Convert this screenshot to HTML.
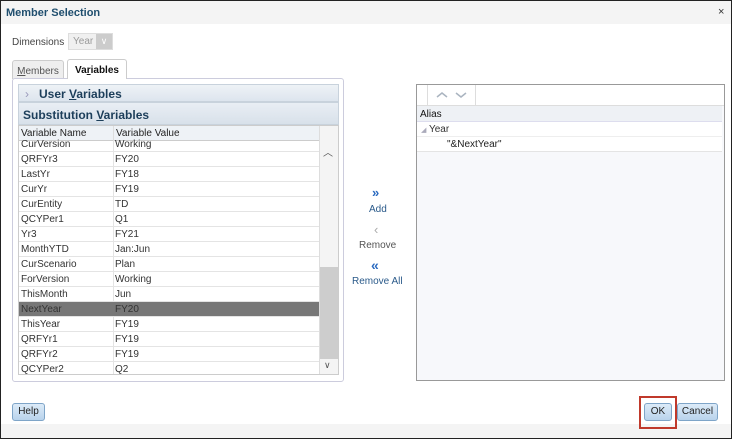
<!DOCTYPE html><html><head><style>
*{box-sizing:border-box;margin:0;padding:0}
body{width:732px;height:439px;font-family:"Liberation Sans",sans-serif;font-size:10px;color:#333;background:#fff;position:relative;overflow:hidden}
.a{position:absolute}
.row{position:absolute;left:0;width:300px;height:15px;border-bottom:1px solid #e4e4e4;line-height:16px}
.row span{position:absolute;top:0}
.btn{position:absolute;border:1px solid #7fa5c8;border-radius:3px;background:linear-gradient(#dcebf8,#b9d3ec);font-size:10px;text-align:center;line-height:16px;color:#222}
</style></head><body>
<div class="a" style="left:0;top:0;width:732px;height:439px;border:1px solid #222"></div>
<div class="a" style="left:1px;top:1px;width:730px;height:23px;background:#f4f4f4"></div>
<div class="a" style="left:6px;top:7px;font-weight:bold;color:#1f4e6e;font-size:11px">Member Selection</div>
<div class="a" style="left:718px;top:6px;font-size:11px">×</div>
<div class="a" style="left:12px;top:37px;color:#444">Dimensions</div>
<div class="a" style="left:68px;top:33px;width:45px;height:17px;border:1px solid #ddd;background:#f0f0f0;color:#999;padding-left:4px;line-height:16px">Year</div>
<div class="a" style="left:96px;top:34px;width:16px;height:15px;background:#ccc;color:#fff;text-align:center;line-height:14px;font-size:9px">∨</div>
<div class="a" style="left:12px;top:60px;width:52px;height:19px;border:1px solid #ccc;border-bottom:none;background:#eee;text-align:center;line-height:21px;color:#555;border-radius:3px 3px 0 0"><u>M</u>embers</div>
<div class="a" style="left:67px;top:59px;width:60px;height:20px;border:1px solid #ccc;border-bottom:none;background:#fff;text-align:center;line-height:22px;font-weight:bold;color:#111;z-index:2;border-radius:3px 3px 0 0">Va<u>r</u>iables</div>
<div class="a" style="left:12px;top:78px;width:332px;height:304px;border:1px solid #ccd;border-radius:3px"></div>
<div class="a" style="left:18px;top:84px;width:321px;height:18px;background:linear-gradient(#eef2f6,#dde5ee);border:1px solid #c8d2dc;font-weight:bold;font-size:12px;color:#1c3e5a;line-height:18px;padding-left:20px"><span style="position:absolute;left:6px;color:#99b;font-weight:normal">›</span>User <u>V</u>ariables</div>
<div class="a" style="left:18px;top:102px;width:321px;height:23px;background:linear-gradient(#e9eef4,#d8e1ea);border:1px solid #c8d2dc;font-weight:bold;font-size:12px;color:#1c3e5a;line-height:24px;padding-left:4px">Substitution <u>V</u>ariables</div>
<div class="a" style="left:18px;top:125px;width:321px;height:250px;border:1px solid #ccc;overflow:hidden">
<div class="a" style="left:0;top:0;width:300px;height:15px;background:#eef2f6;border-bottom:1px solid #ccc;line-height:16px;color:#222"><span class="a" style="left:2px">Variable Name</span><span class="a" style="left:94px;border-left:1px solid #ddd;padding-left:2px;height:15px">Variable Value</span></div>
<div class="a" style="left:300px;top:0;width:20px;height:250px;background:#f4f4f4;border-left:1px solid #ddd"></div>
<div class="a" style="left:301px;top:141px;width:18px;height:92px;background:#cdcdcd"></div>
<div class="a" style="left:304px;top:18px;color:#555">︿</div>
<div class="a" style="left:305px;top:234px;color:#555;font-size:9px">∨</div>
<div class="a" style="left:94px;top:15px;width:1px;height:235px;background:#e4e4e4"></div>
<div class="a" style="left:0;top:15px;width:300px">
<div class="row" style="top:-4px"><span style="left:2px">CurVersion</span><span style="left:96px">Working</span></div>
<div class="row" style="top:11px"><span style="left:2px">QRFYr3</span><span style="left:96px">FY20</span></div>
<div class="row" style="top:26px"><span style="left:2px">LastYr</span><span style="left:96px">FY18</span></div>
<div class="row" style="top:41px"><span style="left:2px">CurYr</span><span style="left:96px">FY19</span></div>
<div class="row" style="top:56px"><span style="left:2px">CurEntity</span><span style="left:96px">TD</span></div>
<div class="row" style="top:71px"><span style="left:2px">QCYPer1</span><span style="left:96px">Q1</span></div>
<div class="row" style="top:86px"><span style="left:2px">Yr3</span><span style="left:96px">FY21</span></div>
<div class="row" style="top:101px"><span style="left:2px">MonthYTD</span><span style="left:96px">Jan:Jun</span></div>
<div class="row" style="top:116px"><span style="left:2px">CurScenario</span><span style="left:96px">Plan</span></div>
<div class="row" style="top:131px"><span style="left:2px">ForVersion</span><span style="left:96px">Working</span></div>
<div class="row" style="top:146px"><span style="left:2px">ThisMonth</span><span style="left:96px">Jun</span></div>
<div class="row" style="top:161px;background:#777;color:#333"><span style="left:2px">NextYear</span><span style="left:96px">FY20</span></div>
<div class="row" style="top:176px"><span style="left:2px">ThisYear</span><span style="left:96px">FY19</span></div>
<div class="row" style="top:191px"><span style="left:2px">QRFYr1</span><span style="left:96px">FY19</span></div>
<div class="row" style="top:206px"><span style="left:2px">QRFYr2</span><span style="left:96px">FY19</span></div>
<div class="row" style="top:221px"><span style="left:2px">QCYPer2</span><span style="left:96px">Q2</span></div>
</div></div>
<div class="a" style="left:372px;top:185px;color:#2a6ac0;font-weight:bold;font-size:13px">»</div>
<div class="a" style="left:369px;top:204px;color:#2a5a8a">Add</div>
<div class="a" style="left:374px;top:222px;color:#aaa;font-size:13px">‹</div>
<div class="a" style="left:359px;top:240px;color:#555">Remove</div>
<div class="a" style="left:371px;top:257px;color:#2a6ac0;font-weight:bold;font-size:14px">«</div>
<div class="a" style="left:352px;top:276px;color:#2a5a8a">Remove All</div>
<div class="a" style="left:416px;top:84px;width:309px;height:297px;border:1px solid #999;background:#f7f8fb"></div>
<div class="a" style="left:417px;top:85px;width:307px;height:21px;background:#fff;border-bottom:1px solid #ddd"></div>
<div class="a" style="left:427px;top:85px;width:49px;height:21px;border-left:1px solid #ddd;border-right:1px solid #ddd"></div>
<svg class="a" style="left:436px;top:90px" width="34" height="10"><path d="M1 7l5-4 5 4M20 3l5 4 5-4" stroke="#aab4c0" stroke-width="1.5" fill="none"/></svg>
<div class="a" style="left:417px;top:106px;width:305px;height:16px;background:#eef1f5;border-bottom:1px solid #dde;line-height:17px;padding-left:3px;color:#111">Alias</div>
<div class="a" style="left:417px;top:122px;width:305px;height:15px;background:#fff;border-bottom:1px solid #eee;line-height:16px;padding-left:4px;color:#333"><span style="color:#aab;font-size:7px">◢</span> Year</div>
<div class="a" style="left:417px;top:137px;width:305px;height:15px;background:#fff;border-bottom:1px solid #e4e4e4;line-height:15px;padding-left:30px;color:#222">"&amp;NextYear"</div>
<div class="a" style="left:1px;top:424px;width:730px;height:14px;background:#f4f4f4"></div>
<div class="btn" style="left:12px;top:403px;width:33px;height:18px">Help</div>
<div class="btn" style="left:644px;top:403px;width:28px;height:18px">OK</div>
<div class="btn" style="left:677px;top:403px;width:41px;height:18px">Cancel</div>
<div class="a" style="left:639px;top:396px;width:38px;height:33px;border:2px solid #c0392b"></div>
</body></html>
